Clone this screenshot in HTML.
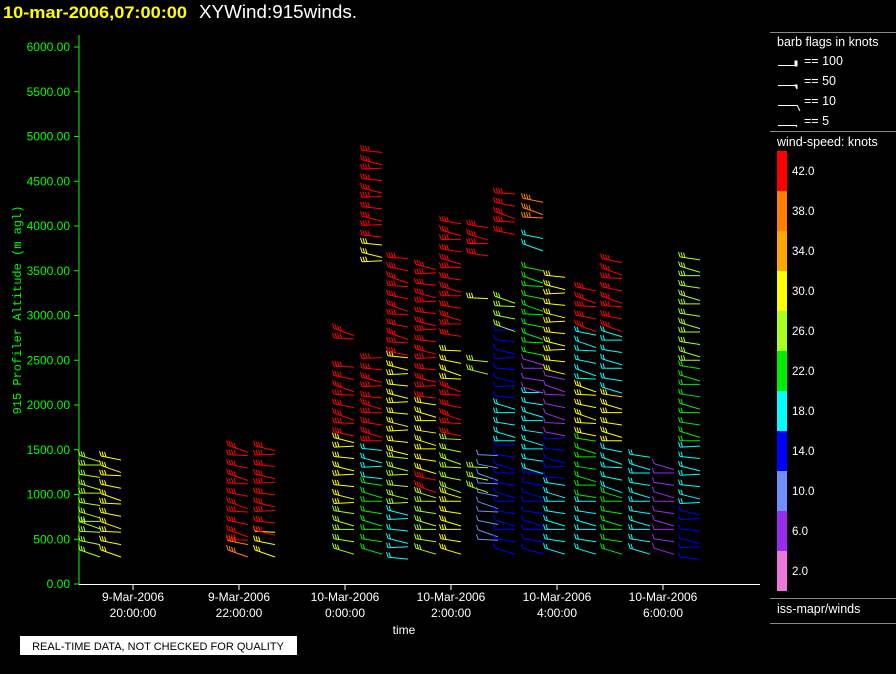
<!DOCTYPE html>
<html><head><meta charset="utf-8"><style>
body{margin:0;background:#000;width:896px;height:674px;overflow:hidden;font-family:"Liberation Sans",sans-serif}
svg{position:absolute;left:0;top:0}
</style></head><body>
<svg id="s" width="896" height="674" xmlns="http://www.w3.org/2000/svg" font-family="Liberation Sans, sans-serif">
<text x="3" y="18" fill="#ffff00" font-size="17" font-weight="bold" textLength="184" lengthAdjust="spacingAndGlyphs">10-mar-2006,07:00:00</text>
<text x="199" y="18" fill="#fff" font-size="18" textLength="158" lengthAdjust="spacingAndGlyphs">XYWind:915winds.</text>
<line x1="79" y1="35" x2="79" y2="585" stroke="#00ff00"/>
<line x1="79" y1="584.5" x2="760" y2="584.5" stroke="#fff"/>
<g id="yt" fill="#00ff00" font-size="12" text-anchor="end"></g>
<text transform="translate(21,310) rotate(-90)" fill="#00ff00" font-size="12" font-family="Liberation Mono, monospace" text-anchor="middle">915 Profiler Altitude (m agl)</text>
<g fill="#fff" font-size="12" text-anchor="middle">
<text x="133" y="601">9-Mar-2006</text><text x="133" y="617">20:00:00</text>
<text x="239" y="601">9-Mar-2006</text><text x="239" y="617">22:00:00</text>
<text x="345" y="601">10-Mar-2006</text><text x="345" y="617">0:00:00</text>
<text x="451" y="601">10-Mar-2006</text><text x="451" y="617">2:00:00</text>
<text x="557" y="601">10-Mar-2006</text><text x="557" y="617">4:00:00</text>
<text x="663" y="601">10-Mar-2006</text><text x="663" y="617">6:00:00</text>
<text x="404" y="634">time</text>
</g>
<g id="xt" stroke="#fff"></g>
<rect x="20" y="636" width="277" height="19" fill="#fff"/>
<text x="158" y="650" font-size="11" text-anchor="middle" fill="#000">REAL-TIME DATA, NOT CHECKED FOR QUALITY</text>
<g stroke="#888"><line x1="770" y1="32.5" x2="896" y2="32.5"/><line x1="770" y1="131.5" x2="896" y2="131.5"/><line x1="770" y1="598.5" x2="896" y2="598.5"/><line x1="770" y1="623.5" x2="896" y2="623.5"/></g>
<g fill="#fff" font-size="12.5">
<text x="777" y="46">barb flags in knots</text>
<text x="804" y="65">== 100</text><text x="804" y="85">== 50</text><text x="804" y="105">== 10</text><text x="804" y="125">== 5</text>
<text x="777" y="146">wind-speed: knots</text>
<text x="777" y="613">iss-mapr/winds</text>
</g>
<g stroke="#fff" fill="#fff">
<line x1="778" y1="65.5" x2="797" y2="65.5"/><rect x="795" y="61" width="2" height="5"/>
<line x1="778" y1="85.5" x2="797" y2="85.5"/><path d="M795 85 L797 85 L797 89 Z"/>
<line x1="778" y1="105.5" x2="797" y2="105.5"/><line x1="797" y1="105" x2="800" y2="111"/>
<line x1="778" y1="125.5" x2="797" y2="125.5"/><line x1="796" y1="125" x2="797" y2="127"/>
</g>
<g id="cb" font-size="11.5" fill="#fff"></g>
<g id="d" stroke-width="1" fill="none"></g>
</svg>
<script>
var NS="http://www.w3.org/2000/svg";
function el(p,t,a,tx){var e=document.createElementNS(NS,t);for(var k in a)e.setAttribute(k,a[k]);if(tx)e.textContent=tx;document.getElementById(p).appendChild(e);}
function Y(a){return 584-a*0.0895;}
for(var i=0;i<=12;i++){var v=i*500,y=Y(v);el('yt','text',{x:70,y:y+4},v.toFixed(2));el('yt','line',{x1:74,y1:y,x2:79,y2:y,stroke:'#00ff00'});}
[133,239,345,451,557,663].forEach(function(x){el('xt','line',{x1:x,y1:585,x2:x,y2:590});});
var C=['#ff0000','#ff7f00','#ffa500','#ffff00','#a8ff20','#00ee00','#00ffff','#0000ff','#6f8fff','#9a2cf0','#ee77dd'];
var L=['42.0','38.0','34.0','30.0','26.0','22.0','18.0','14.0','10.0','6.0','2.0'];
for(var i=0;i<11;i++){el('cb','rect',{x:777,y:151+40*i,width:10,height:40,fill:C[i]});el('cb','text',{x:792,y:175+40*i},L[i]);}
var cols=[
[82,[[380,700,4],[700,1520,4]]],[103,[[380,1500,3]]],
[230,[[380,500,1],[500,1600,0]]],[257,[[380,600,3],[600,1550,0]]],
[336,[[400,900,4],[900,1700,3],[1700,2450,0],[2750,2950,0]]],
[364,[[400,1200,5],[1200,1600,6],[1600,2100,0],[2100,2600,0],[3600,3900,3],[3900,4900,0]]],
[390,[[300,900,6],[900,1500,4],[1500,2600,3],[2600,3650,0]]],
[418,[[400,1100,4],[1100,1300,0],[1300,2100,3],[2100,3650,0]]],
[443,[[400,1100,3],[1100,1700,4],[1700,2300,0],[2300,2650,3],[2800,4150,0]]],
[470,[[1100,1400,4],[2400,2600,4],[3200,3300,3],[3700,4100,0]]],
[480,[[500,1500,8]]],
[497,[[400,1600,7],[1600,2100,6],[2100,2900,7],[2900,3300,4],[3950,4400,0]]],
[525,[[400,1300,7],[1300,2200,6],[2200,2600,9],[2600,3600,5],[3800,4000,6],[4100,4400,1]]],
[547,[[400,1200,6],[1200,1700,7],[1700,2400,9],[2400,3500,3]]],
[578,[[400,1000,6],[1000,1700,5],[1700,2300,3],[2300,2900,6],[2900,3400,0]]],
[604,[[400,1100,5],[1100,1600,6],[1600,2200,3],[2200,2900,6],[2900,3700,0]]],
[632,[[400,1500,6]]],[656,[[400,1400,9]]],
[682,[[300,900,7],[900,1600,6],[1600,2500,5],[2500,3750,4]]]
];
var sp=[42,38,34,30,26,22,18,14,10,6,2],h="";
cols.forEach(function(c){c[1].forEach(function(s){var col=C[s[2]],n=Math.round(sp[s[2]]/10);
for(var a=s[0];a<=s[1];a+=105){var x=c[0]+((a*7)%5)-2,y=Y(a),dy=((a*13)%9)-1;
var d="M"+x+" "+y+" L"+(x+20)+" "+(y+dy);
for(var k=0;k<n;k++){var bx=x+k*2.5,by=y+dy*k*2.5/20;d+=" M"+bx+" "+by+" L"+(bx-1.5)+" "+(by-5);}
h+='<path d="'+d+'" stroke="'+col+'"/>';}});});
document.getElementById('d').innerHTML=h;
</script>
</body></html>
